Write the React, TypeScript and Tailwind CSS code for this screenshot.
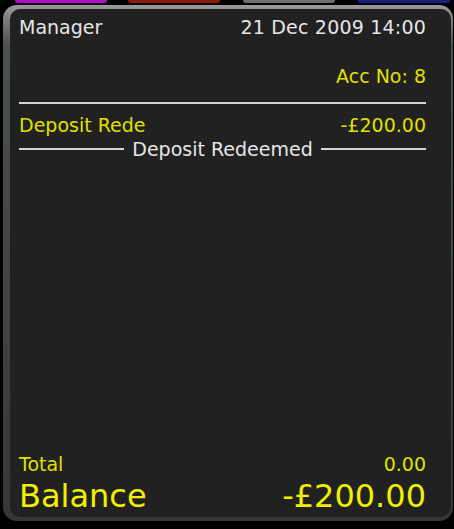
import React from 'react';

const font = { fontFamily: '"DejaVu Sans", Verdana, sans-serif' };

const App: React.FC = () => {
  return (
    <div className="w-[454px] h-[529px] bg-black overflow-hidden" style={font}>
      {/* tab stubs peeking above the panel */}
      <div className="flex h-[4px]">
        <div className="ml-[15px] w-[92px] h-[3px] rounded-b-[3px] bg-[#b010c8]" />
        <div className="ml-[21px] w-[92px] h-[3px] rounded-b-[3px] bg-[#8c1a0e]" />
        <div className="ml-[23px] w-[92px] h-[3px] rounded-b-[3px] bg-[#6b706b]" />
        <div className="ml-[23px] w-[92px] h-[3px] rounded-b-[3px] bg-[#14227a]" />
      </div>

      <div className="mt-[1px] ml-[3px] mr-[1px] h-[516px] rounded-[14px] bg-gradient-to-b from-[#9a9a9a] via-[#4b5050] via-[8%] to-[#353838] pt-[4px] pl-[7px] pr-[2px] pb-[4px]">
        <section className="h-full rounded-[10px] bg-[#212121] pl-[9px] pr-[25px] pt-[7px] pb-[3px] flex flex-col text-[19px] leading-[22px]">
          <div className="flex justify-between text-[#e6e6e6]">
            <span>Manager</span>
            <span className="tracking-[0.2px]">21 Dec 2009 14:00</span>
          </div>

          <div className="mt-[27px] text-right text-[#e0e000]">Acc No: 8</div>

          <div className="mt-[15px] h-[2px] bg-[#d4d4d4]" />

          <div className="mt-[10px] flex justify-between text-[#e0e000]">
            <span>Deposit Rede</span>
            <span>-£200.00</span>
          </div>

          <div className="mt-[2px] flex items-center text-[#e6e6e6]">
            <div className="flex-1 h-[2px] bg-[#d4d4d4]" />
            <span className="px-[8px]">Deposit Redeemed</span>
            <div className="flex-1 h-[2px] bg-[#d4d4d4]" />
          </div>

          <div className="mt-auto flex justify-between text-[#e0e000]">
            <span>Total</span>
            <span>0.00</span>
          </div>
          <div className="mt-[3px] flex justify-between items-baseline text-[32px] leading-[36px] text-[#f0f000]">
            <span>Balance</span>
            <span>-£200.00</span>
          </div>
        </section>
      </div>
    </div>
  );
};

export default App;
